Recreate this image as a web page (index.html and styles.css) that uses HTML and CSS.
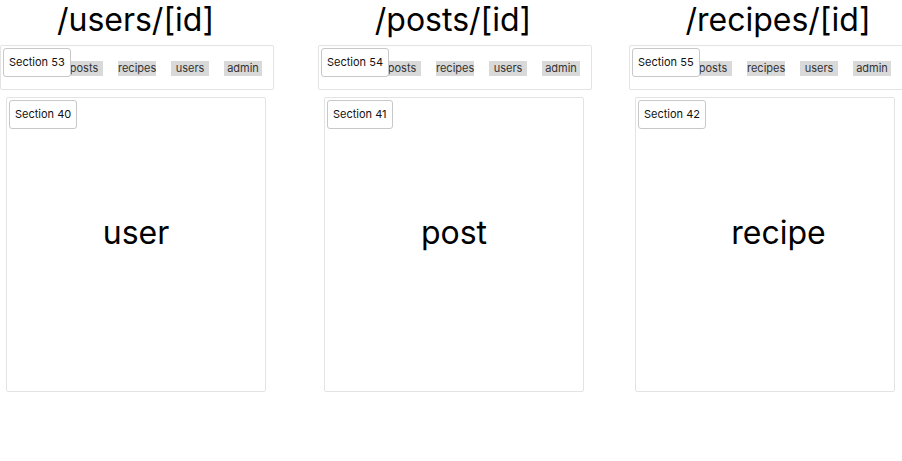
FILE: index.html
```html
<!DOCTYPE html>
<html>
<head>
<meta charset="utf-8">
<link rel="stylesheet" href="styles.css">
</head>
<body>
<div class="cols">
  <div class="col col-users">
    <h1 class="title">/users/[id]</h1>
    <nav class="nav">
      <span class="badge">Section 53</span>
      <a class="link">posts</a>
      <a class="link">recipes</a>
      <a class="link">users</a>
      <a class="link">admin</a>
    </nav>
    <div class="panel">
      <span class="badge">Section 40</span>
      <div class="big">user</div>
    </div>
  </div>
  <div class="col col-posts">
    <h1 class="title">/posts/[id]</h1>
    <nav class="nav">
      <span class="badge">Section 54</span>
      <a class="link">posts</a>
      <a class="link">recipes</a>
      <a class="link">users</a>
      <a class="link">admin</a>
    </nav>
    <div class="panel">
      <span class="badge">Section 41</span>
      <div class="big">post</div>
    </div>
  </div>
  <div class="col col-recipes">
    <h1 class="title">/recipes/[id]</h1>
    <nav class="nav">
      <span class="badge">Section 55</span>
      <a class="link">posts</a>
      <a class="link">recipes</a>
      <a class="link">users</a>
      <a class="link">admin</a>
    </nav>
    <div class="panel">
      <span class="badge">Section 42</span>
      <div class="big">recipe</div>
    </div>
  </div>
</div>
</body>
</html>
```
FILE: styles.css
```css
* { box-sizing: border-box; }
html, body { margin: 0; padding: 0; background: #fff; }
body {
  font-family: Inter, "Noto Sans", sans-serif;
  color: #000;
  overflow: hidden;
}
.cols {
  display: flex;
  align-items: flex-start;
}
.col { flex: none; display: flex; flex-direction: column; }
.col-users { width: 318px; }
.col-posts { width: 311px; }
.col-recipes { width: 298px; }
.title {
  margin: 0;
  font-size: 32px;
  font-weight: 400;
  line-height: 40px;
  height: 45px;
  text-align: center;
}
.col-users .title { width: 271px; }
.col-posts .title { width: 270px; }
.col-recipes .title { width: 298px; }
.nav {
  position: relative;
  width: 274px;
  height: 45px;
  border: 1px solid #e3e3e3;
  border-radius: 2px;
  display: flex;
  justify-content: flex-end;
  align-items: flex-start;
  gap: 15px;
  padding: 15px 11px 0 0;
}
.link {
  width: 38px;
  height: 15px;
  background: #d9d9d9;
  font-size: 11px;
  line-height: 15px;
  text-align: center;
  color: #333;
}
.badge {
  position: absolute;
  top: 2px;
  left: 2px;
  padding: 0 5px;
  height: 29px;
  line-height: 27px;
  font-size: 11px;
  background: #fff;
  border: 1px solid #c8c8c8;
  border-radius: 3px;
  color: #111;
}
.panel {
  position: relative;
  margin: 7px 0 0 6px;
  width: 260px;
  height: 295px;
  border: 1px solid #e3e3e3;
  border-radius: 2px;
  display: flex;
  align-items: center;
  justify-content: center;
  padding-bottom: 24px;
}
.big {
  font-size: 32px;
  line-height: 40px;
}
.col-recipes .big { margin-left: 27px; }
```
